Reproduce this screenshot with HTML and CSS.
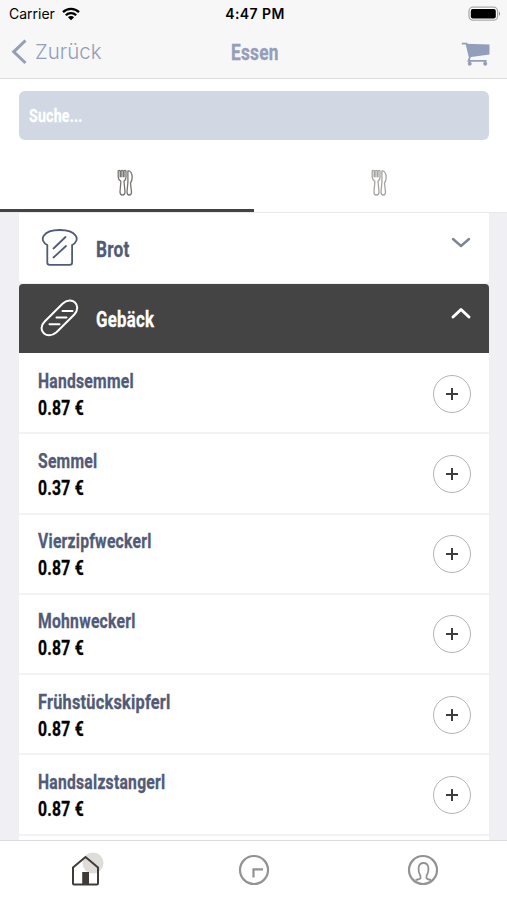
FILE: index.html
```html
<!DOCTYPE html>
<html lang="de">
<head>
<meta charset="utf-8">
<title>Essen</title>
<link rel="stylesheet" href="styles.css">
</head>
<body>
<div class="app">
  <header class="top">
    <div class="status">
      <div class="carrier"><span>Carrier</span>
        <svg width="18" height="14" viewBox="0 0 18 14"><g fill="none" stroke="#000" stroke-width="2.3"><path d="M1 5.2a11.5 11.5 0 0 1 16 0"/><path d="M3.8 8.3a7.4 7.4 0 0 1 10.4 0"/></g><path d="M9 13.3 5.9 10.3a4.4 4.4 0 0 1 6.2 0z"/></svg>
      </div>
      <div class="time">4:47 PM</div>
      <svg class="battery" width="33" height="16" viewBox="0 0 33 16"><rect x="1" y="1.2" width="28.6" height="13" rx="4" fill="#fff" stroke="#aaa" stroke-width="1.3"/><rect x="2.8" y="3" width="25" height="9.6" rx="2"/><path d="M31 5.5q2 2.2 0 4.4z" fill="#888"/></svg>
    </div>
    <nav class="nav">
      <div class="back"><svg width="16" height="26" viewBox="0 0 16 26"><path d="M14.500 1.500 2.700 12.800 14.500 24" fill="none" stroke="#949eb9" stroke-width="3"/></svg><span>Zurück</span></div>
      <h1><span class="condensed">Essen</span></h1>
      <svg class="cart" width="29" height="25" viewBox="0 0 29 25"><path d="M5 1.800 28.500 2.500V12.500L8.500 15.300z" fill="#939fba"/><path d="M.8 1.600H5.500L8.800 15.500 7.500 18.800H25.500" fill="none" stroke="#939fba" stroke-width="1.800"/><path d="M8.700 18.500v3M24.200 18.500v3" stroke="#939fba" stroke-width="1.800"/><g fill="#939fba"><circle cx="8.700" cy="21.800" r="2"/><circle cx="24.200" cy="21.800" r="2"/></g></svg>
    </nav>
  </header>
  <section class="controls">
    <div class="search"><span class="condensed">Suche...</span></div>
    <div class="tabs">
      <div class="tab active"><svg width="17" height="28" viewBox="0 0 17 28"><g fill="none" stroke="currentColor" stroke-width="1.3"><path d="M1.200 2v6c0 2 1 3.300 2.700 4.300L3 23c0 4 5 4 5 0L7 12.300C8.300 11.300 9 10 9 8V2q-1-1.200-2 0v5.500H6.100V2q-1-1.200-2 0v5.500H3.200V2q-1-1.200-2 0z"/><path d="M10.900 2v11l-.9 10c0 4 4.500 4 4.500 0l-1-9c1.500-2 1.700-4 1.700-6 0-3-1.800-7-4.300-6z"/></g></svg></div>
      <div class="tab"><svg width="17" height="28" viewBox="0 0 17 28"><g fill="none" stroke="currentColor" stroke-width="1.3"><path d="M1.200 2v6c0 2 1 3.300 2.700 4.300L3 23c0 4 5 4 5 0L7 12.300C8.300 11.300 9 10 9 8V2q-1-1.200-2 0v5.500H6.100V2q-1-1.200-2 0v5.500H3.200V2q-1-1.200-2 0z"/><path d="M10.900 2v11l-.9 10c0 4 4.500 4 4.500 0l-1-9c1.500-2 1.700-4 1.700-6 0-3-1.800-7-4.300-6z"/></g></svg></div>
    </div>
  </section>
  <main class="list">
    <div class="category bread">
      <svg width="38" height="38" viewBox="0 0 38 38" fill="none" stroke="#515b78" stroke-width="1.800" stroke-linecap="round"><path d="M6.300 16v17.500q0 2.300 2.300 2.300h20.200q2.300 0 2.300-2.300V16C40 11.500 36 1 18.700 1S-2.500 11.500 6.300 16z"/><path d="M12.500 19.500 24.500 8M12.500 28.500 25 17"/></svg>
      <h2><span class="condensed">Brot</span></h2>
      <svg class="chevron" width="20" height="12" viewBox="0 0 20 12"><path d="m2 2 8 7 8-7"/></svg>
    </div>
    <div class="category open">
      <svg width="38" height="38" viewBox="0 0 38 38" fill="none" stroke="#fff" stroke-width="2" stroke-linecap="round"><path d="M3.700 21.500 21.500 3.700C31-5 41.500 5.500 33.300 14.500L15.500 32.300C6 40.500-5 30 3.700 21.500z"/><path d="M21.500 11h10M15.500 17.500h10M8.500 24.200h10"/></svg>
      <h2><span class="condensed">Gebäck</span></h2>
      <svg class="chevron" width="20" height="12" viewBox="0 0 20 12"><path d="m2 10 8-7.500 8 7.500"/></svg>
    </div>
    <div class="item"><div><h3><span class="condensed">Handsemmel</span></h3><p><span class="condensed">0.87 €</span></p></div><button class="add"><svg width="12" height="12" viewBox="0 0 12 12"><path d="M6 0v12M0 6h12"/></svg></button></div>
    <div class="item"><div><h3><span class="condensed">Semmel</span></h3><p><span class="condensed">0.37 €</span></p></div><button class="add"><svg width="12" height="12" viewBox="0 0 12 12"><path d="M6 0v12M0 6h12"/></svg></button></div>
    <div class="item"><div><h3><span class="condensed">Vierzipfweckerl</span></h3><p><span class="condensed">0.87 €</span></p></div><button class="add"><svg width="12" height="12" viewBox="0 0 12 12"><path d="M6 0v12M0 6h12"/></svg></button></div>
    <div class="item"><div><h3><span class="condensed">Mohnweckerl</span></h3><p><span class="condensed">0.87 €</span></p></div><button class="add"><svg width="12" height="12" viewBox="0 0 12 12"><path d="M6 0v12M0 6h12"/></svg></button></div>
    <div class="item"><div><h3><span class="condensed wide">Frühstückskipferl</span></h3><p><span class="condensed">0.87 €</span></p></div><button class="add"><svg width="12" height="12" viewBox="0 0 12 12"><path d="M6 0v12M0 6h12"/></svg></button></div>
    <div class="item"><div><h3><span class="condensed">Handsalzstangerl</span></h3><p><span class="condensed">0.87 €</span></p></div><button class="add"><svg width="12" height="12" viewBox="0 0 12 12"><path d="M6 0v12M0 6h12"/></svg></button></div>
  </main>
  <footer class="bottom">
    <div><svg width="34" height="36" viewBox="0 0 34 36"><circle cx="25" cy="11" r="10.500" fill="#deddda"/><path d="M5 15.500 17.500 5 30 15.500v16q0 1-1 1H6q-1 0-1-1z" fill="none" stroke="#413b38" stroke-width="2" stroke-linejoin="round"/><path d="M14.200 20h6.800v12.500h-6.800z" fill="#413b38"/></svg></div>
    <div><svg width="32" height="32" viewBox="0 0 32 32" fill="none" stroke="#929292" stroke-width="2.200"><circle cx="16" cy="16" r="14"/><path d="M15.500 23.500v-8.200H25"/></svg></div>
    <div><svg width="32" height="32" viewBox="0 0 32 32" fill="none" stroke="#929292" stroke-width="2.200"><circle cx="16" cy="16" r="14"/><path stroke-width="1.800" d="M8.500 26c5-.8 5.700-1.500 4.800-4.500C11 18 10 9 16.500 9s5.500 9 3.200 12.500c-.9 3 0 3.700 4.300 4.500"/></svg></div>
  </footer>
</div>
</body>
</html>
```
FILE: styles.css
```css
* { box-sizing: border-box; }
body { margin: 0; background: #efeff4; font-family: "Liberation Sans", sans-serif; }
h1, h2, h3, p { margin: 0; }
svg { display: block; flex: none; overflow: visible; }
.app { width: 507px; height: 900px; display: flex; flex-direction: column; overflow: hidden; }
.condensed { display: inline-block; font-family: Roboto, sans-serif; font-weight: 700; letter-spacing: .3px; -webkit-text-stroke: .3px currentColor; transform: scaleX(.785); transform-origin: left center; white-space: nowrap; }
.condensed.wide { transform: scaleX(.815); }
.top { height: 79px; flex: none; background: #f7f7f7; border-bottom: 1px solid #dcdcde; }
.status { height: 27px; display: grid; grid-template-columns: 1fr auto 1fr; align-items: center; padding: 0 6px 0 9px; font: 14px/27px Inter, sans-serif; }
.carrier { display: flex; align-items: center; gap: 7px; }
.time { font-weight: 600; font-size: 14px; letter-spacing: .4px; margin-left: 0; }
.battery { justify-self: end; }
.nav { height: 51px; display: grid; grid-template-columns: 1fr auto 1fr; align-items: center; padding: 0 17px 0 11px; color: #949eb9; }
.back { display: flex; align-items: center; gap: 8px; font: 300 20.5px/26px Inter, sans-serif; margin-top: -2px; }
.nav h1 { width: 46px; font-size: 22px; line-height: 30px; margin-left: 6px; margin-top: 1px; }
.cart { justify-self: end; margin-top: 4px; }
.controls { height: 134px; flex: none; background: #fff; padding-top: 12px; border-bottom: 1px solid #e9e9ec; }
.search { height: 49px; margin: 0 18px 0 19px; border-radius: 6px; background: #d1d8e4; color: #fff; padding-left: 10px; font-size: 18px; line-height: 50px; }
.tabs { display: flex; height: 72px; }
.tab { flex: 1; display: flex; justify-content: center; padding: 29px 2px 0 0; border-bottom: 3px solid transparent; color: #a6a4a0; }
.tab.active { color: #777570; border-color: #454243; }
.list { flex: 1; min-height: 0; overflow: hidden; margin: 0 18px 0 19px; }
.category { height: 70px; display: flex; align-items: center; background: #fff; color: #515b78; padding: 0 18px 0 22px; border-radius: 0 0 4px 4px; margin-bottom: 1px; }
.category h2 { flex: 1; margin-left: 17px; font-size: 22px; line-height: 30px; margin-top: 3px; }
.category.open { height: 69px; background: #444; color: #fff; border-radius: 4px 4px 0 0; margin: 0; }
.open .condensed { transform: scaleX(.765); }
.chevron { margin-bottom: 11px; }
.chevron path { fill: none; stroke: #7d8498; stroke-width: 2.4; stroke-linecap: round; stroke-linejoin: round; }
.open .chevron path { stroke: #fff; stroke-width: 3; }
.open + .item { height: 81.25px; padding-top: 3px; }
.item { height: 80.25px; background: #fff; border-bottom: 2px solid #f3f3f5; display: flex; align-items: center; justify-content: space-between; padding: 1px 18px 0 19px; }
.item h3, .item p { font-size: 20px; line-height: 27px; }
.item h3 { color: #515b78; margin-top: 2px; }
.item p { color: #000; }
.item:last-child { box-shadow: 0 8px #fff; }
.add { width: 38px; height: 38px; padding: 0; border: 1px solid #b4b4b4; border-radius: 50%; background: none; display: flex; align-items: center; justify-content: center; }
.add path { stroke: #3e3e3e; stroke-width: 2; }
.bottom { height: 60px; flex: none; display: grid; grid-template-columns: repeat(3, 1fr); background: #fff; border-top: 1px solid #dcdcde; padding-bottom: 1px; }
.bottom div { display: flex; justify-content: center; align-items: center; }
```
